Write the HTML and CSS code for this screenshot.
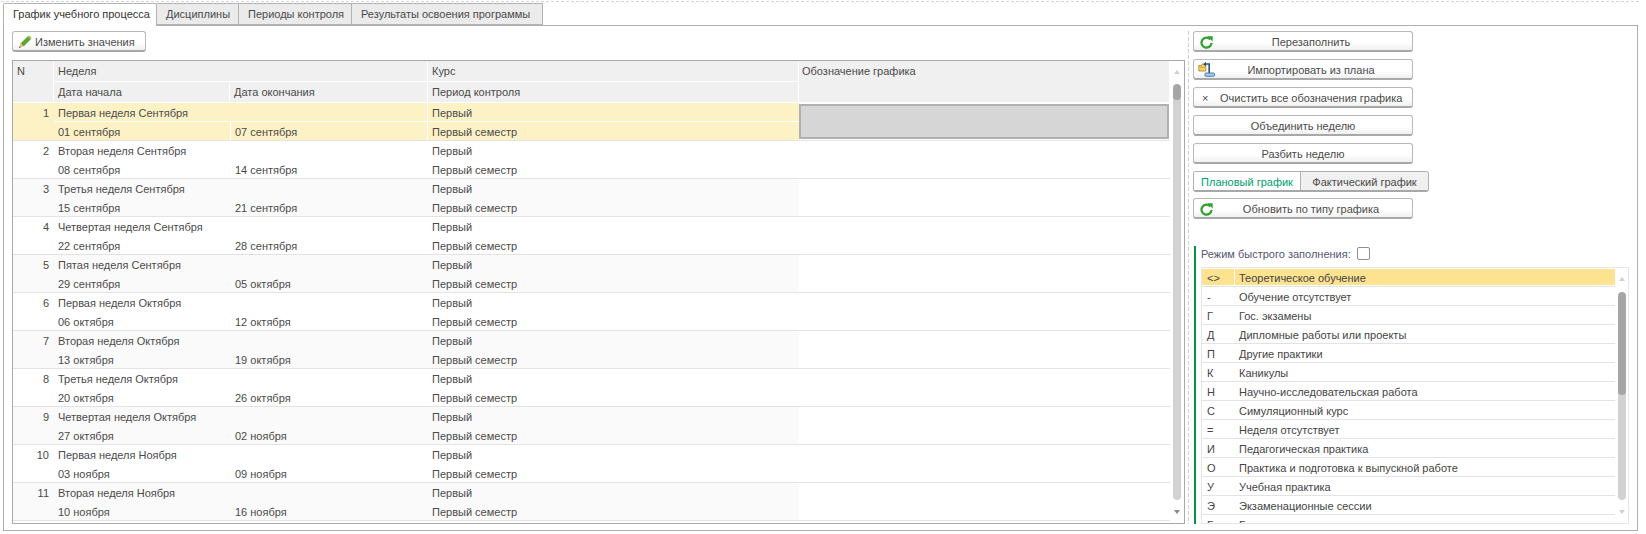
FILE: index.html
```html
<!DOCTYPE html>
<html lang="ru">
<head>
<meta charset="utf-8">
<title>График учебного процесса</title>
<link rel="stylesheet" href="styles.css">
</head>
<body>
<div class="page">
  <div class="tabs">
    <div class="tab active">График учебного процесса</div>
    <div class="tab t2">Дисциплины</div>
    <div class="tab t3">Периоды контроля</div>
    <div class="tab t4">Результаты освоения программы</div>
  </div>
  <div class="panel">
    <div class="left">
      <button class="btn edit">
        <svg class="ico-pen" width="14" height="14" viewBox="0 0 14 14"><path d="M3 8.500 9.800 1.700l2.600 2.600-6.800 6.800z" fill="#5fa52e" stroke="#3f7f1e" stroke-width=".6"/><path d="M9.800 1.700 10.800.8c.4-.3.8-.3 1.100 0l1.400 1.400c.3.300.3.700 0 1l-.9 1.100z" fill="#9ccb5a"/><path d="M3 8.500 1 13l4.600-1.900z" fill="#eeb45c"/><path d="M1 13l.7-1.700 1 1z" fill="#3a3a3a"/></svg>
        <span>Изменить значения</span>
      </button>
      <div class="table">
        <div class="tbody">
          <div class="head">
            <div class="hn">N</div>
            <div class="hgroup">
              <div class="hrow"><div class="h wk">Неделя</div><div class="h kurs">Курс</div></div>
              <div class="hrow"><div class="h d1">Дата начала</div><div class="h d2">Дата окончания</div><div class="h kurs">Период контроля</div></div>
            </div>
            <div class="h oboz">Обозначение графика</div>
          </div>
          <div id="rows">
            <div class="row sel"><div class="n">1</div><div class="cells"><div class="l1"><div class="wkc">Первая неделя Сентября</div><div class="kc">Первый</div></div><div class="l2"><div class="d1c">01 сентября</div><div class="d2c">07 сентября</div><div class="kc">Первый семестр</div></div></div><div class="oc"><div class="cursor"></div></div></div>
            <div class="row"><div class="n">2</div><div class="cells"><div class="l1"><div class="wkc">Вторая неделя Сентября</div><div class="kc">Первый</div></div><div class="l2"><div class="d1c">08 сентября</div><div class="d2c">14 сентября</div><div class="kc">Первый семестр</div></div></div><div class="oc"></div></div>
            <div class="row alt"><div class="n">3</div><div class="cells"><div class="l1"><div class="wkc">Третья неделя Сентября</div><div class="kc">Первый</div></div><div class="l2"><div class="d1c">15 сентября</div><div class="d2c">21 сентября</div><div class="kc">Первый семестр</div></div></div><div class="oc"></div></div>
            <div class="row"><div class="n">4</div><div class="cells"><div class="l1"><div class="wkc">Четвертая неделя Сентября</div><div class="kc">Первый</div></div><div class="l2"><div class="d1c">22 сентября</div><div class="d2c">28 сентября</div><div class="kc">Первый семестр</div></div></div><div class="oc"></div></div>
            <div class="row alt"><div class="n">5</div><div class="cells"><div class="l1"><div class="wkc">Пятая неделя Сентября</div><div class="kc">Первый</div></div><div class="l2"><div class="d1c">29 сентября</div><div class="d2c">05 октября</div><div class="kc">Первый семестр</div></div></div><div class="oc"></div></div>
            <div class="row"><div class="n">6</div><div class="cells"><div class="l1"><div class="wkc">Первая неделя Октября</div><div class="kc">Первый</div></div><div class="l2"><div class="d1c">06 октября</div><div class="d2c">12 октября</div><div class="kc">Первый семестр</div></div></div><div class="oc"></div></div>
            <div class="row alt"><div class="n">7</div><div class="cells"><div class="l1"><div class="wkc">Вторая неделя Октября</div><div class="kc">Первый</div></div><div class="l2"><div class="d1c">13 октября</div><div class="d2c">19 октября</div><div class="kc">Первый семестр</div></div></div><div class="oc"></div></div>
            <div class="row"><div class="n">8</div><div class="cells"><div class="l1"><div class="wkc">Третья неделя Октября</div><div class="kc">Первый</div></div><div class="l2"><div class="d1c">20 октября</div><div class="d2c">26 октября</div><div class="kc">Первый семестр</div></div></div><div class="oc"></div></div>
            <div class="row alt"><div class="n">9</div><div class="cells"><div class="l1"><div class="wkc">Четвертая неделя Октября</div><div class="kc">Первый</div></div><div class="l2"><div class="d1c">27 октября</div><div class="d2c">02 ноября</div><div class="kc">Первый семестр</div></div></div><div class="oc"></div></div>
            <div class="row"><div class="n">10</div><div class="cells"><div class="l1"><div class="wkc">Первая неделя Ноября</div><div class="kc">Первый</div></div><div class="l2"><div class="d1c">03 ноября</div><div class="d2c">09 ноября</div><div class="kc">Первый семестр</div></div></div><div class="oc"></div></div>
            <div class="row alt"><div class="n">11</div><div class="cells"><div class="l1"><div class="wkc">Вторая неделя Ноября</div><div class="kc">Первый</div></div><div class="l2"><div class="d1c">10 ноября</div><div class="d2c">16 ноября</div><div class="kc">Первый семестр</div></div></div><div class="oc"></div></div>
          </div>
        </div>
        <div class="sb main-sb"><i class="up"></i><div class="track"><div class="thumb"></div></div><i class="down"></i></div>
      </div>
    </div>
    <div class="right">
      <button class="btn wide icon">
        <svg class="ico" width="13" height="13" viewBox="0 0 13 13"><path d="M10.300 3.400A5 5 0 1 0 11.500 7" fill="none" stroke="#2ea32e" stroke-width="2.300"/><path d="M7.400.3h5.300v5.300z" fill="#2ea32e"/></svg>
        <span>Перезаполнить</span>
      </button>
      <button class="btn wide icon import">
        <svg class="ico" width="17" height="16" viewBox="0 0 17 16"><path d="M.8 4.500h2.500l1-1.500h3.500v7H.8z" fill="#f5d36c" stroke="#c48a22" stroke-width=".9"/><path d="M2 6.200h4.500" stroke="#c48a22" stroke-width=".8"/><path d="M5.200 3.200 8 .8v1.400h4v10h-1.600V3.800H8v1.600z" fill="#24527f"/><rect x="7" y="12" width="9.500" height="3.300" rx=".8" fill="#a9c8e6" stroke="#3b78b5" stroke-width=".9"/></svg>
        <span>Импортировать из плана</span>
      </button>
      <button class="btn wide clear"><span class="x">×</span><span>Очистить все обозначения графика</span></button>
      <button class="btn wide"><span>Объединить неделю</span></button>
      <button class="btn wide"><span>Разбить неделю</span></button>
      <div class="tumbler"><div class="tb on">Плановый график</div><div class="tb">Фактический график</div></div>
      <button class="btn wide icon">
        <svg class="ico" width="13" height="13" viewBox="0 0 13 13"><path d="M10.300 3.400A5 5 0 1 0 11.500 7" fill="none" stroke="#2ea32e" stroke-width="2.300"/><path d="M7.400.3h5.300v5.300z" fill="#2ea32e"/></svg>
        <span>Обновить по типу графика</span>
      </button>
      <div class="quick">
        <div class="qlabel"><span>Режим быстрого заполнения:</span><div class="check"></div></div>
        <div class="list">
          <div class="items">
            <div class="it sel"><div class="c">&lt;&gt;</div><div class="t">Теоретическое обучение</div></div>
            <div class="it"><div class="c">-</div><div class="t">Обучение отсутствует</div></div>
            <div class="it"><div class="c">Г</div><div class="t">Гос. экзамены</div></div>
            <div class="it"><div class="c">Д</div><div class="t">Дипломные работы или проекты</div></div>
            <div class="it"><div class="c">П</div><div class="t">Другие практики</div></div>
            <div class="it"><div class="c">К</div><div class="t">Каникулы</div></div>
            <div class="it"><div class="c">Н</div><div class="t">Научно-исследовательская работа</div></div>
            <div class="it"><div class="c">С</div><div class="t">Симуляционный курс</div></div>
            <div class="it"><div class="c">=</div><div class="t">Неделя отсутствует</div></div>
            <div class="it"><div class="c">И</div><div class="t">Педагогическая практика</div></div>
            <div class="it"><div class="c">О</div><div class="t">Практика и подготовка к выпускной работе</div></div>
            <div class="it"><div class="c">У</div><div class="t">Учебная практика</div></div>
            <div class="it"><div class="c">Э</div><div class="t">Экзаменационные сессии</div></div>
            <div class="it"><div class="c">Б</div><div class="t">Базовая практика</div></div>
          </div>
          <div class="sb list-sb"><i class="up"></i><div class="track"><div class="thumb"></div></div><i class="down"></i></div>
        </div>
      </div>
    </div>
  </div>
</div>
</body>
</html>
```
FILE: styles.css
```css
* { box-sizing: border-box; }
html, body { margin: 0; padding: 0; }
body { width: 1646px; height: 534px; background: #fff; overflow: hidden; font: 11px/14px "Liberation Sans", Arial, sans-serif; color: #4a4a4a; }
.page { height: 534px; padding: 1px 8px 0 3px; background-image: repeating-linear-gradient(90deg, #d4d4d4 0 3px, transparent 3px 5px); background-size: 1638px 1px; background-repeat: no-repeat; background-position: 1px 1px; }
.tabs { display: flex; height: 24px; padding: 2px 0 0 0; position: relative; z-index: 1; }
.tab { height: 22px; padding: 3px 0 0 9px; background: #ebebeb; border: 1px solid #b3b3b3; border-left: 0; white-space: nowrap; }
.tab.active { height: 23px; width: 154px; background: #fff; border: 1px solid #b3b3b3; border-bottom: 0; border-radius: 2px 2px 0 0; color: #333; }
.t2 { width: 82px; } .t3 { width: 113px; } .t4 { width: 191px; }
.panel { height: 506px; border: 1px solid #aeaeae; display: flex; padding: 5px 0 0 8px; }
.left { width: 1173px; }
.btn { display: flex; align-items: center; position: relative; height: 21px; padding: 1px 0 0; background: linear-gradient(#fff 60%, #f0f0f0); border: 1px solid #b9b9b9; border-bottom: 2px solid #a8a8a8; border-radius: 3px; font: inherit; color: #4a4a4a; }
.edit { width: 134px; padding-left: 5px; gap: 3px; margin-bottom: 8px; white-space: nowrap; }
.table { width: 1173px; height: 464px; border: 1px solid #a9a9a9; display: flex; position: relative; overflow: hidden; }
.tbody { width: 1157px; height: 462px; overflow: hidden; }
.head { display: flex; height: 42px; background: #fff; }
.hn { width: 40px; height: 41px; background: #f0f0f0; padding: 3px 4px; margin-right: 1px; }
.hgroup { width: 745px; }
.hrow { display: flex; height: 21px; }
.h { height: 20px; background: #f0f0f0; padding: 3px 4px; margin-right: 1px; }
.wk { width: 373px; } .kurs { width: 370px; }
.d1 { width: 175px; } .d2 { width: 197px; }
.oboz { width: 370px; height: 41px; margin-right: 0; padding-left: 3px; }
.row { display: flex; height: 38px; border-bottom: 1px solid #e3e3e3; position: relative; }
.n { width: 41px; text-align: right; padding: 3px 5px 0 0; }
.cells { width: 745px; }
.l1, .l2 { display: flex; padding-top: 3px; }
.l1 { height: 19px; }
.l2 { height: 18px; }
.wkc { width: 374px; padding-left: 4px; }
.d1c { width: 177px; padding-left: 4px; }
.d2c { width: 197px; padding-left: 4px; }
.kc { padding-left: 4px; }
.oc { width: 371px; background: #fff; }
.alt .n, .alt .cells { background: #fafafa; }
.row.sel { background: #fdf2c6; }
.sel .l1 { border-bottom: 1px solid #fff; }
.sel .wkc { border-right: 1px solid #fff; margin-top: -3px; padding-top: 3px; }
.sel .d1c { border-right: 1px solid #fff; margin-top: -3px; padding-top: 3px; }
.sel .d2c { border-right: 1px solid #fff; margin-top: -3px; padding-top: 3px; }
.sel .oc { padding: 1px 1px 0 0; }
.cursor { height: 35px; background: #d6d6d6; border: 2px solid #b0b0b0; }
.sb { position: absolute; width: 8px; display: flex; flex-direction: column; align-items: center; }
.main-sb { left: 1160px; top: 0; height: 462px; }
.list-sb { left: 416px; top: 0; height: 255px; }
.track { width: 8px; background: #d2d2d2; border-radius: 4px; overflow: hidden; margin-top: 23px; }
.main-sb .track { height: 416px; }
.list-sb .track { height: 208px; margin-top: 24px; }
.thumb { width: 8px; background: #a6a6a6; border-radius: 4px; }
.main-sb .thumb { height: 16px; }
.list-sb .thumb { height: 103px; }
.sb i { position: absolute; left: 1px; width: 0; height: 0; border-left: 3px solid transparent; border-right: 3px solid transparent; }
.sb .up { top: 9px; border-bottom: 4px solid #d0d0d0; }
.sb .down { bottom: 9px; border-top: 4px solid #8a8a8a; }
.list-sb .down { border-top-color: #d0d0d0; }
.right { width: 445px; margin-left: 3px; padding: 0 0 0 5px; height: 493px; position: relative; background-image: repeating-linear-gradient(#cfcfcf 0 4px, transparent 4px 6px); background-size: 1px 100%; background-repeat: no-repeat; }
.right > .btn { margin-bottom: 7px; }
.wide { width: 220px; justify-content: center; }
.icon { padding-left: 16px; }
.ico { position: absolute; left: 6px; top: 4px; }
.import .ico { top: 1px; left: 4px; }
.clear { padding-left: 26px; justify-content: flex-start; white-space: nowrap; }
.x { position: absolute; left: 8px; top: 3px; }
.tumbler { display: flex; width: 236px; height: 21px; margin-bottom: 6px; border: 1px solid #b0b0b0; border-bottom: 2px solid #a8a8a8; border-radius: 3px; overflow: hidden; }
.tb { width: 106px; padding-top: 3px; text-align: center; background: #fff; }
.tb:last-child { width: 128px; background: #f0f0f0; border-left: 1px solid #b0b0b0; }
.tb.on { color: #00a06a; }
.quick { position: absolute; left: 6px; top: 215px; width: 436px; height: 278px; border-left: 2px solid #009646; padding: 0 0 0 5px; }
.qlabel { height: 21px; display: flex; align-items: flex-start; gap: 6px; color: #555570; padding-top: 1px; line-height: 14px; }
.check { width: 13px; height: 13px; border: 1px solid #8f8f8f; border-radius: 2px; background: #fff; }
.list { width: 428px; height: 257px; border: 1px solid #e6e6e6; position: relative; overflow: hidden; }
.items { width: 413px; }
.it { display: flex; height: 19px; border-bottom: 1px solid #e3e3e3; line-height: 20px; color: #444; }
.c { width: 33px; padding-left: 5px; flex: none; }
.t { padding-left: 4px; flex: 1; }
.it.sel { padding-top: 1px; }
.it.sel .c, .it.sel .t { background: #fde38f; height: 16px; line-height: 18px; overflow: hidden; }
.it.sel .c { border-right: 1px solid #fff; }
```
